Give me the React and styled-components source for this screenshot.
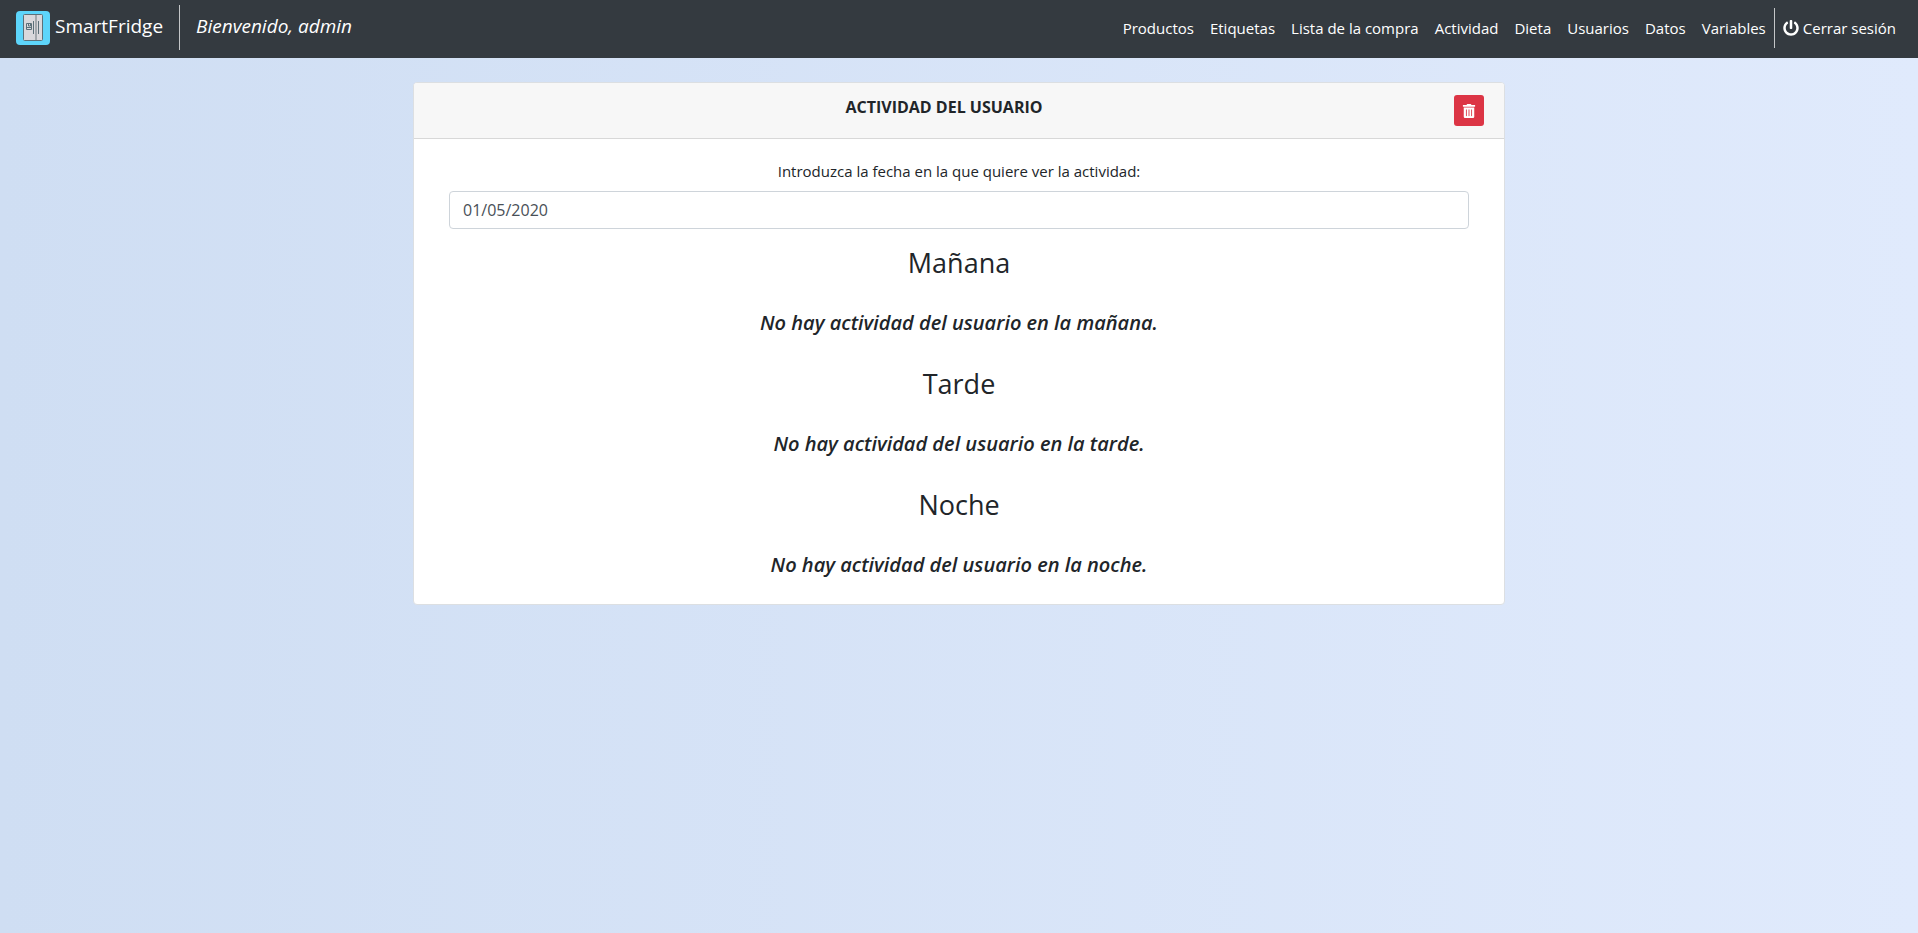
import React from "react";
import styled, { createGlobalStyle } from "styled-components";
import { FaPowerOff, FaTrashAlt } from "react-icons/fa";

const GlobalStyle = createGlobalStyle`
  *, *::before, *::after { box-sizing: border-box; }
  body {
    margin: 0;
    min-height: 100vh;
    background: linear-gradient(to right, #cfdef3, #e0eafc);
    color: #212529;
    font-family: "Segoe UI", "Open Sans", "Noto Sans", sans-serif;
    font-size: 15px;
    line-height: 24px;
  }
`;

const Navbar = styled.header`
  display: flex;
  align-items: flex-start;
  justify-content: space-between;
  height: 58px;
  padding: 5px 14px 0 16px;
  background: #343a40;
  color: #fff;
`;

const BrandArea = styled.div`
  display: flex;
  height: 45px;
  font-size: 19px;
`;

const Brand = styled.a`
  display: flex;
  align-items: center;
  gap: 5px;
  padding: 0 16px 4px 0;
  color: inherit;
  text-decoration: none;

  svg { margin-top: 4px; }
`;

const Welcome = styled.span`
  display: flex;
  align-items: center;
  padding: 0 0 4px 16px;
  border-left: 1px solid #c4c6c8;
  font-style: italic;
`;

const NavLinks = styled.nav`
  display: flex;
  padding-top: 3px;
`;

const NavLink = styled.a`
  display: flex;
  align-items: center;
  gap: 4px;
  height: 40px;
  padding: 0 8px;
  border-left: ${({ $divided }) => ($divided ? "1px solid #c4c6c8" : "0")};
  color: #fff;
  text-decoration: none;
  white-space: nowrap;
`;

const Page = styled.main`
  padding: 24px 16px;
`;

const Card = styled.section`
  max-width: 1092px;
  margin: 0 auto;
  border: 1px solid #dcdfe2;
  border-radius: 4px;
  background: #fff;
  text-align: center;
`;

const CardHeader = styled.div`
  display: flex;
  align-items: flex-start;
  padding: 12px 20px;
  border-bottom: 1px solid #d8d8d8;
  border-radius: 3px 3px 0 0;
  background: #f7f7f7;
`;

const CardTitle = styled.h1`
  flex: 1;
  margin: 0;
  font-size: 16px;
  line-height: 24px;
  font-weight: 700;
`;

const DeleteButton = styled.button`
  display: flex;
  align-items: center;
  justify-content: center;
  width: 30px;
  height: 31px;
  padding: 0;
  border: 0;
  border-radius: 3px;
  background: #dc3545;
  color: #fff;
  font-size: 14px;
  cursor: pointer;
`;

const CardBody = styled.div`
  padding: 20px 35px 27px;
`;

const DateLabel = styled.label`
  display: block;
  margin-bottom: 8px;
`;

const DateInput = styled.input`
  display: block;
  width: 100%;
  height: 38px;
  margin-bottom: 16px;
  padding: 6px 13px;
  border: 1px solid #ced4da;
  border-radius: 4px;
  background: #fff;
  color: #495057;
  font: inherit;
  font-size: 16px;
`;

const Periods = styled.div`
  display: grid;
  gap: 31px;
`;

const PeriodTitle = styled.h2`
  margin: 0 0 30px;
  font-size: 27px;
  line-height: 36px;
  font-weight: 500;
`;

const PeriodMessage = styled.p`
  margin: 0;
  font-size: 20px;
  line-height: 24px;
  font-style: italic;
  font-weight: 600;
`;

const sections = ["Productos", "Etiquetas", "Lista de la compra", "Actividad", "Dieta", "Usuarios", "Datos", "Variables"];
const periods = [
  { title: "Mañana", name: "mañana" },
  { title: "Tarde", name: "tarde" },
  { title: "Noche", name: "noche" },
];

function FridgeLogo() {
  return (
    <svg width="34" height="34" viewBox="0 0 34 34" fill="none" aria-hidden="true">
      <rect width="34" height="34" rx="4" fill="#5dd5fb" />
      <rect x="7.5" y="3.5" width="19" height="26" rx="1" fill="#d9d8dc" stroke="#5c7079" />
      <path d="M19 4h2v25h-2z" fill="#a3a8ad" />
      <path d="M17.5 10v13M22.5 10v13M10.5 12.5h5v6h-5zM11 16.5h4M12.5 13v2h2v-2" stroke="#5c7079" />
    </svg>
  );
}

export default function App() {
  return (
    <>
      <GlobalStyle />
      <Navbar>
        <BrandArea>
          <Brand href="#">
            <FridgeLogo />
            SmartFridge
          </Brand>
          <Welcome>Bienvenido, admin</Welcome>
        </BrandArea>
        <NavLinks>
          {sections.map((name) => (
            <NavLink key={name} href="#">{name}</NavLink>
          ))}
          <NavLink href="#" $divided>
            <FaPowerOff size={16} />
            Cerrar sesión
          </NavLink>
        </NavLinks>
      </Navbar>
      <Page>
        <Card>
          <CardHeader>
            <CardTitle>ACTIVIDAD DEL USUARIO</CardTitle>
            <DeleteButton type="button" aria-label="Eliminar actividad">
              <FaTrashAlt />
            </DeleteButton>
          </CardHeader>
          <CardBody>
            <DateLabel htmlFor="fecha">Introduzca la fecha en la que quiere ver la actividad:</DateLabel>
            <DateInput id="fecha" type="text" defaultValue="01/05/2020" />
            <Periods>
              {periods.map(({ title, name }) => (
                <div key={name}>
                  <PeriodTitle>{title}</PeriodTitle>
                  <PeriodMessage>No hay actividad del usuario en la {name}.</PeriodMessage>
                </div>
              ))}
            </Periods>
          </CardBody>
        </Card>
      </Page>
    </>
  );
}
